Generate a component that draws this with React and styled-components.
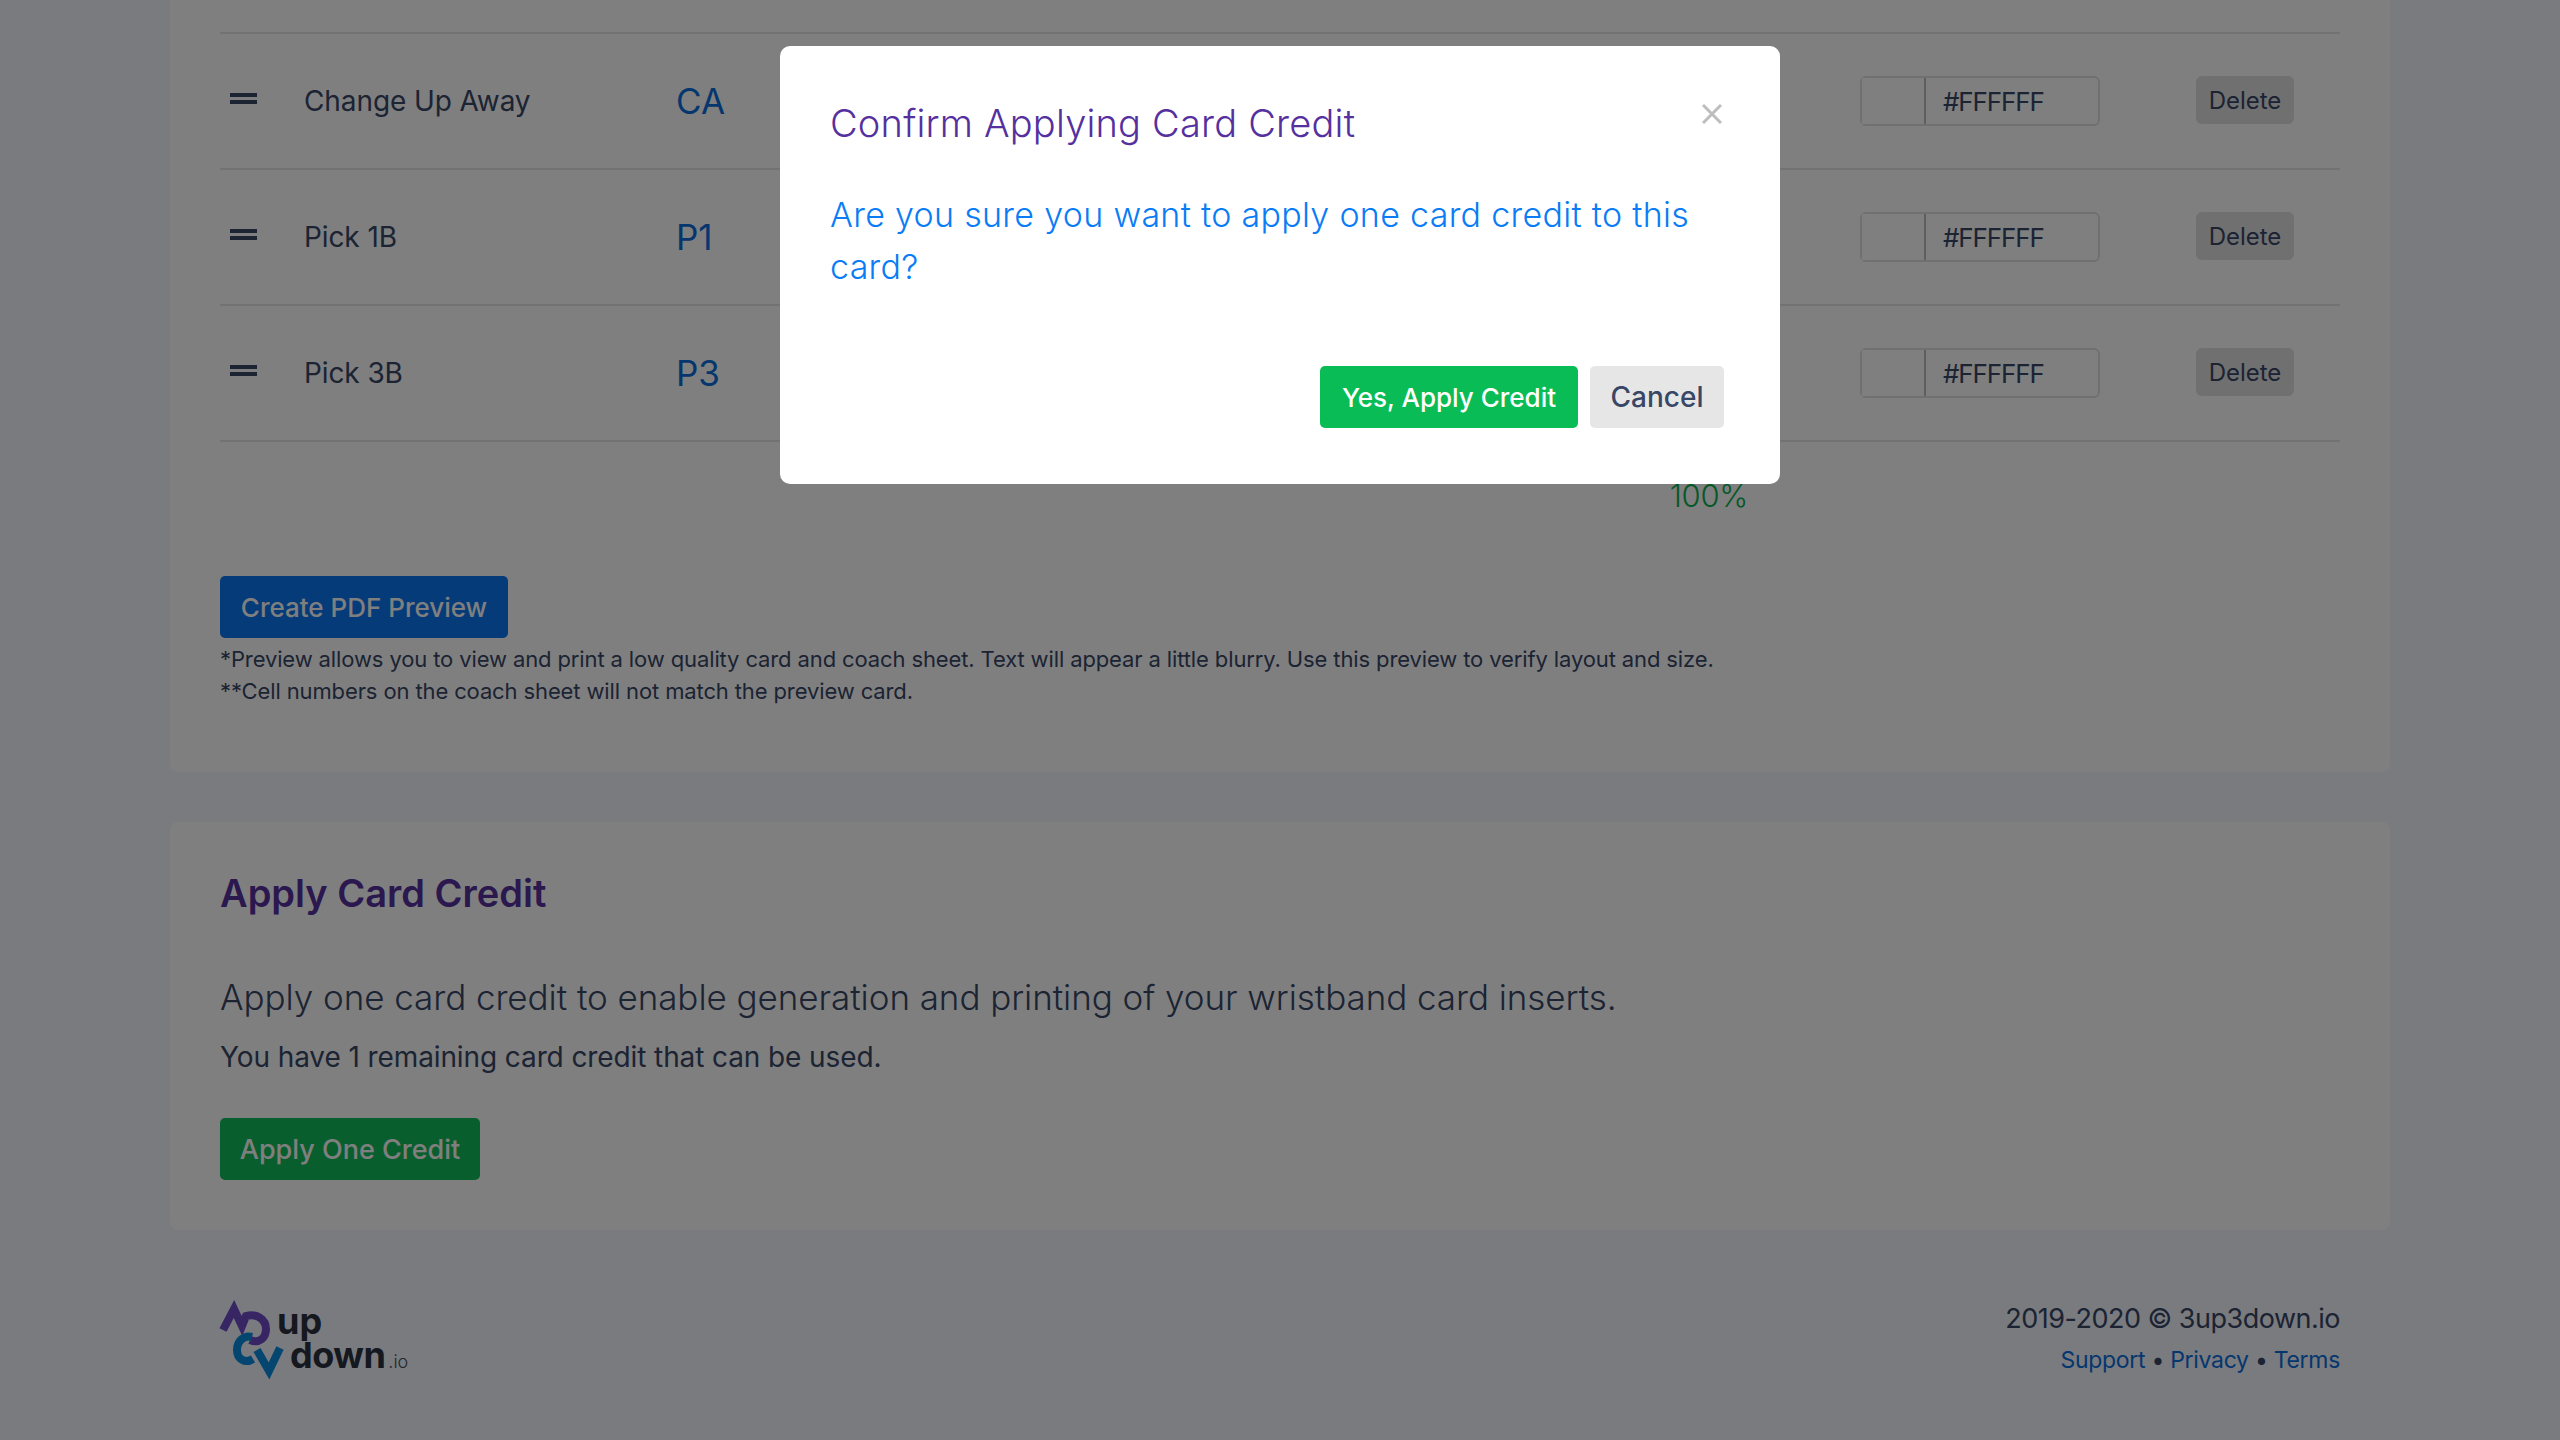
import React from "react"
import styled, { createGlobalStyle } from "styled-components"

const GlobalStyle = createGlobalStyle`
  html, body {
    margin: 0;
    padding: 0;
    background: #f2f6ff;
  }
  * {
    box-sizing: border-box;
  }
`

const Page = styled.div`
  height: 1440px;
  overflow: hidden;
  display: flex;
  flex-direction: column;
  justify-content: flex-end;
  padding: 0 170px;
  font-family: Inter, "Liberation Sans", sans-serif;
  color: #384766;
`

const Card = styled.section`
  flex: none;
  background: #fff;
  border-radius: 8px;
  padding: ${(p) => p.$padding || "50px"};
  margin-bottom: 50px;
`

const PitchList = styled.div`
  border-top: 2px solid #e4e4e4;
`

const PitchRow = styled.div`
  display: grid;
  grid-template-columns: 85px 371px 1fr 336px 144px;
  align-items: center;
  height: 136px;
  border-bottom: 2px solid #e4e4e4;
`

const DragHandle = styled.svg`
  width: 27px;
  height: 11px;
  margin: 0 0 6px 10px;
  fill: #384766;
`

const PitchName = styled.span`
  font-size: 28px;
  letter-spacing: -0.1px;
  margin-left: -1px;
`

const PitchCode = styled.span`
  font-size: 35px;
  color: #0a6edc;
`

const ColorInput = styled.div`
  width: 240px;
  height: 50px;
  display: flex;
  align-items: center;
  border: 2px solid #e0e0e0;
  border-radius: 6px;
`

const Swatch = styled.div`
  width: 64px;
  height: 46px;
  border-right: 2px solid #bdbdbd;
  background: #fff;
`

const HexValue = styled.span`
  margin-left: 17px;
  font-size: 26px;
  letter-spacing: -1.1px;
`

const DeleteButton = styled.button`
  width: 98px;
  height: 48px;
  margin-bottom: 2px;
  border: 0;
  border-radius: 6px;
  background: #e0e0e0;
  color: #384766;
  font: 24px Inter, sans-serif;
`

const TotalRow = styled.div`
  height: 134px;
  padding: 32px 592px 0 0;
  text-align: right;
  font-size: 31px;
  letter-spacing: -0.3px;
  line-height: 44px;
  font-weight: 300;
  color: #0eb052;
`

const ActionButton = styled.button`
  display: block;
  height: 62px;
  width: ${(p) => p.$width}px;
  border: 0;
  border-radius: 5px;
  background: ${(p) => p.$bg};
  color: ${(p) => p.$color || "#fff"};
  font: 500 ${(p) => p.$size}px Inter, sans-serif;
`

const Notes = styled.p`
  margin: 5px 0 15px;
  font-size: 22px;
  line-height: 32px;
  letter-spacing: -0.12px;
`

const SectionTitle = styled.h2`
  margin: 0;
  font-size: 38px;
  line-height: 54px;
  font-weight: 600;
  color: #55309e;
`

const Lead = styled.p`
  margin: 52px 0 0;
  font-size: 35px;
  letter-spacing: -0.06px;
  line-height: 50px;
  font-weight: 300;
`

const SubLead = styled.p`
  margin: 15px 0 41px;
  font-size: 28px;
  letter-spacing: -0.1px;
  line-height: 40px;
`

const Footer = styled.footer`
  flex: none;
  height: 160px;
  padding: 21px 50px 0;
  display: flex;
  justify-content: space-between;
  align-items: flex-start;
`

const Logo = styled.div`
  display: flex;
  align-items: flex-start;
`

const LogoMark = styled.svg`
  width: 70px;
  height: 80px;
  fill: none;
  overflow: visible;
`

const LogoWords = styled.div`
  display: flex;
  flex-direction: column;
  color: #2a303d;
  font-size: 36px;
  line-height: 34px;
  font-weight: 700;
`

const LogoUp = styled.span`
  margin: 3px 0 0 -13px;
`

const LogoDown = styled.span`
  letter-spacing: -0.5px;
`

const LogoTld = styled.span`
  margin-left: 3px;
  font-size: 18px;
  letter-spacing: 0;
  font-weight: 300;
  color: #4a4f5a;
`

const FooterInfo = styled.div`
  text-align: right;
`

const Copyright = styled.div`
  font-size: 27px;
  letter-spacing: -0.5px;
  line-height: 36px;
`

const FooterLinks = styled.div`
  margin-top: 6px;
  font-size: 23px;
  letter-spacing: -0.3px;
  line-height: 34px;
`

const FooterLink = styled.a`
  color: #0a6edc;
`

const Backdrop = styled.div`
  position: fixed;
  inset: 0;
  background: rgba(0, 0, 0, 0.5);
  display: flex;
  justify-content: center;
  align-items: flex-start;
  padding-top: 46px;
  font-family: Inter, "Liberation Sans", sans-serif;
`

const Modal = styled.div`
  position: relative;
  width: 1000px;
  height: 438px;
  padding: 50px 56px 56px 50px;
  background: #fff;
  border-radius: 10px;
`

const ModalTitle = styled.h3`
  margin: 0;
  font-size: 38px;
  letter-spacing: 0.2px;
  line-height: 54px;
  font-weight: 300;
  color: #55309e;
`

const ModalBody = styled.p`
  margin: 39px 0 73px;
  font-size: 34px;
  letter-spacing: 0.3px;
  line-height: 52px;
  font-weight: 300;
  color: #0a7cf5;
`

const ModalActions = styled.div`
  display: flex;
  justify-content: flex-end;
  gap: 12px;
`

const CloseIcon = styled.svg`
  position: absolute;
  top: 58px;
  right: 58px;
  width: 20px;
  height: 20px;
  stroke: #bdbdbd;
  stroke-width: 3;
`

const pitches = [
  { name: "Change Up Away", code: "CA" },
  { name: "Pick 1B", code: "P1" },
  { name: "Pick 3B", code: "P3" },
]

export default function App() {
  return (
    <>
      <GlobalStyle />
      <Page>
        <Card>
          <PitchList>
            {pitches.map((pitch) => (
              <PitchRow key={pitch.code}>
                <DragHandle viewBox="0 0 27 11">
                  <rect width="27" height="4" />
                  <rect y="7" width="27" height="4" />
                </DragHandle>
                <PitchName>{pitch.name}</PitchName>
                <PitchCode>{pitch.code}</PitchCode>
                <ColorInput>
                  <Swatch />
                  <HexValue>#FFFFFF</HexValue>
                </ColorInput>
                <DeleteButton>Delete</DeleteButton>
              </PitchRow>
            ))}
          </PitchList>
          <TotalRow>100%</TotalRow>
          <ActionButton $width={288} $size={26} $bg="#0b76f0">Create PDF Preview</ActionButton>
          <Notes>
            *Preview allows you to view and print a low quality card and coach sheet. Text will appear a little blurry. Use this preview to verify layout and size.
            <br />
            **Cell numbers on the coach sheet will not match the preview card.
          </Notes>
        </Card>
        <Card $padding="44px 50px 50px">
          <SectionTitle>Apply Card Credit</SectionTitle>
          <Lead>Apply one card credit to enable generation and printing of your wristband card inserts.</Lead>
          <SubLead>You have 1 remaining card credit that can be used.</SubLead>
          <ActionButton $width={260} $size={27} $bg="#12bc5a">Apply One Credit</ActionButton>
        </Card>
        <Footer>
          <Logo>
            <LogoMark viewBox="0 0 70 80">
              <path d="M3 29 L14 8 L22 25 L26 15 C36 12 46 18 46 28 C46 37 39 43 30 39" stroke="#704cc8" strokeWidth="8" />
              <path d="M32 36 C24 34 17 40 17 49 C17 58 25 63 33 58 M37 49 L49 70 L60 47" stroke="#088cde" strokeWidth="8" />
            </LogoMark>
            <LogoWords>
              <LogoUp>up</LogoUp>
              <LogoDown>down<LogoTld>.io</LogoTld></LogoDown>
            </LogoWords>
          </Logo>
          <FooterInfo>
            <Copyright>2019-2020 © 3up3down.io</Copyright>
            <FooterLinks>
              <FooterLink>Support</FooterLink> • <FooterLink>Privacy</FooterLink> • <FooterLink>Terms</FooterLink>
            </FooterLinks>
          </FooterInfo>
        </Footer>
      </Page>
      <Backdrop>
        <Modal>
          <CloseIcon viewBox="0 0 20 20">
            <path d="M1 1 L19 19 M19 1 L1 19" />
          </CloseIcon>
          <ModalTitle>Confirm Applying Card Credit</ModalTitle>
          <ModalBody>Are you sure you want to apply one card credit to this card?</ModalBody>
          <ModalActions>
            <ActionButton $width={258} $size={26} $bg="#09bc55">Yes, Apply Credit</ActionButton>
            <ActionButton $width={134} $size={28} $bg="#e6e6e6" $color="#384766">Cancel</ActionButton>
          </ModalActions>
        </Modal>
      </Backdrop>
    </>
  )
}
